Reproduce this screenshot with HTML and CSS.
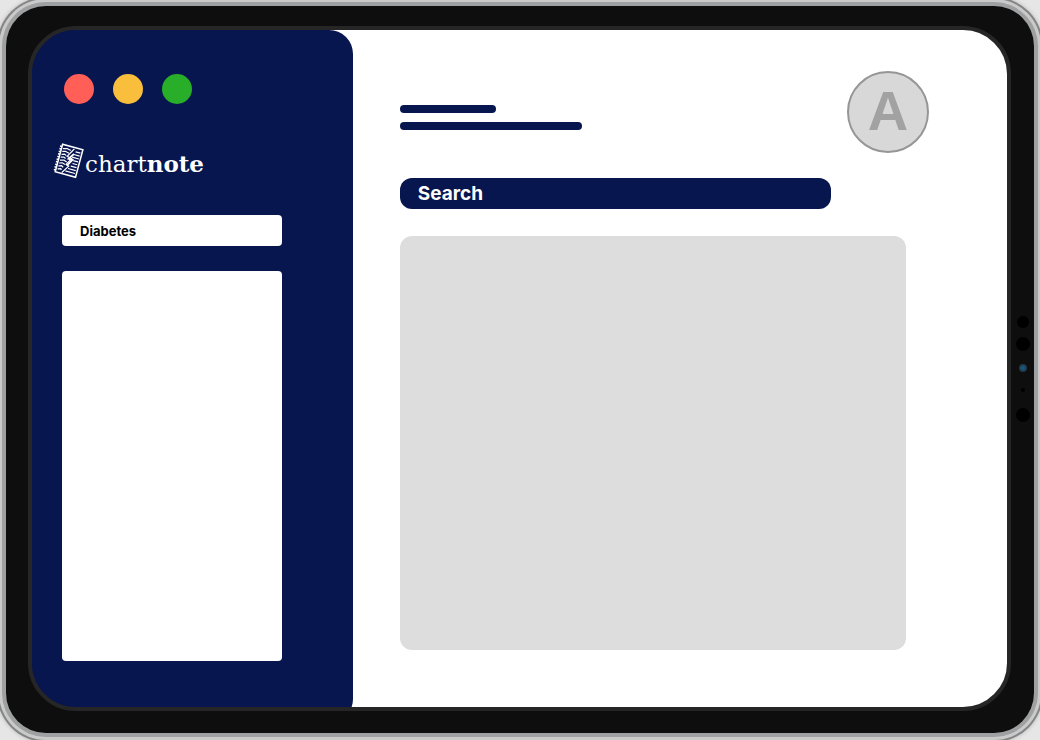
FILE: index.html
```html
<!DOCTYPE html>
<html lang="en">
<head>
<meta charset="utf-8">
<meta name="viewport" content="width=device-width, initial-scale=1">
<title>Chartnote</title>
<link rel="stylesheet" href="styles.css">
</head>
<body>
<div class="tablet">
  <div class="screen">
    <aside class="sidebar">
      <div class="lights">
        <span class="light light-red"></span>
        <span class="light light-yellow"></span>
        <span class="light light-green"></span>
      </div>
      <div class="brand">
        <svg class="brand-icon" width="32" height="36" viewBox="0 0 32 36" fill="none" stroke="#fff" aria-hidden="true">
          <g transform="rotate(15 16 18)">
            <path d="M5.500 3.500H26.500V32H5.500Z" stroke-width="1.500"/>
            <path d="M4.500 5v26" stroke-width="2" stroke-dasharray="1.500 1.200"/>
            <path d="M7 7.500l4-1 4 1M7 10.500l3-1 4 1M7 13.500l3-1 2 1M7 16.500l3-1 2 1M7 19.500l4-1 3 1M7 22.500l3-1 3 1M7 25.500l3-1 2 1M7 28.500l3-1 1 1M20 7.500h5M19 10.500h6M18 13.500h7M20 16.500h5M20 19.500h5M19 22.500h6M17 25.500h8M15 28.500h10" stroke-width="1.200"/>
            <path d="M18 5l-5 9 5 1-4 7 3 1-5 8" stroke-width="1.200"/>
            <path d="M19 10l-4 6 4 0-4 7" stroke-width="1.800"/>
          </g>
        </svg>
        <span class="brand-name">chart<b>note</b></span>
      </div>
      <input class="topic" type="text" value="Diabetes" aria-label="Topic">
      <div class="results"></div>
    </aside>
    <main class="content">
      <header class="header">
        <div class="lines">
          <span class="line line-short"></span>
          <span class="line line-long"></span>
        </div>
        <div class="avatar">A</div>
      </header>
      <input class="search" type="search" placeholder="Search" aria-label="Search">
      <section class="panel"></section>
    </main>
  </div>
  <div class="sensors">
    <span class="sensor sensor-medium"></span>
    <span class="sensor sensor-large"></span>
    <span class="sensor sensor-lens"></span>
    <span class="sensor sensor-small"></span>
    <span class="sensor sensor-large"></span>
  </div>
</div>
</body>
</html>
```
FILE: styles.css
```css
* {
  box-sizing: border-box;
}

body {
  margin: 0;
  min-height: 100vh;
  padding: 6px 6px 7px;
  display: flex;
  overflow: hidden;
  background: #e6e6e6;
  font-family: Inter, "Liberation Sans", sans-serif;
}

.tablet {
  position: relative;
  flex: 1;
  display: flex;
  padding: 20px 23px 22px 22px;
  border-radius: 40px;
  background: #0e0e0e;
  box-shadow: 0 0 0 4px #9fa0a1, 0 0 0 7px #cacaca, 0 0 0 9px #858585, 0 0 4px 9px #b8b8b8;
}

.screen {
  flex: 1;
  display: flex;
  overflow: hidden;
  border: 4px solid #262626;
  border-radius: 48px;
  background: linear-gradient(to right, #08164f 60px, #fff 60px);
  background-origin: border-box;
}

.sidebar {
  flex: 0 0 32.9%;
  display: flex;
  flex-direction: column;
  margin-bottom: -16px;
  padding: 44px 71px 62px 30px;
  border-radius: 0 24px 24px 0;
  background: #08164f;
}

.lights {
  display: flex;
  gap: 19px;
  padding-left: 2px;
}

.light {
  width: 30px;
  height: 30px;
  border-radius: 50%;
}

.light-red {
  background: #ff5f57;
}

.light-yellow {
  background: #f9be3c;
}

.light-green {
  background: #28ae28;
}

.brand {
  display: flex;
  align-items: center;
  margin: 37px 0 34px -9px;
  color: #fff;
}

.brand-icon {
  flex: none;
}

.brand-name {
  padding-top: 6px;
  font-family: "DejaVu Serif", serif;
  font-size: 23px;
  line-height: 33px;
}

.topic {
  width: 100%;
  height: 31px;
  padding: 0 18px;
  border: 0;
  border-radius: 4px;
  background: #fff;
  color: #000;
  font: 700 13px Inter, "Liberation Sans", sans-serif;
}

.results {
  flex: 1;
  margin-top: 25px;
  border-radius: 4px;
  background: #fff;
}

.content {
  flex: 1;
  display: flex;
  flex-direction: column;
  padding: 41px 101px 57px 47px;
}

.header {
  display: flex;
  justify-content: space-between;
  margin-right: -23px;
}

.lines {
  display: flex;
  flex-direction: column;
  gap: 9px;
  padding-top: 34px;
}

.line {
  height: 8px;
  border-radius: 4px;
  background: #08164f;
}

.line-short {
  width: 96px;
}

.line-long {
  width: 182px;
}

.avatar {
  display: flex;
  align-items: center;
  justify-content: center;
  width: 82px;
  height: 82px;
  padding-bottom: 4px;
  border: 2px solid #969696;
  border-radius: 50%;
  background: #d8d8d8;
  color: #a2a2a2;
  font: bold 56px "Liberation Sans", sans-serif;
}

.search {
  width: 85.2%;
  height: 31px;
  margin-top: 25px;
  padding: 0 18px;
  border: 0;
  border-radius: 12px;
  background: #08164f;
  color: #fff;
  font: 700 19px Inter, "Liberation Sans", sans-serif;
}

.search::placeholder {
  color: #fff;
  opacity: 1;
}

.panel {
  flex: 1;
  margin-top: 27px;
  border-radius: 12px;
  background: #ddd;
}

/* Camera and sensors sit on the bezel, centred on its right side */
.sensors {
  position: absolute;
  top: 50%;
  right: 4px;
  display: flex;
  flex-direction: column;
  align-items: center;
  padding-bottom: 2px;
  transform: translateY(-50%);
}

.sensor {
  border-radius: 50%;
  background: #000;
}

.sensor-medium {
  width: 12px;
  height: 12px;
  margin-bottom: 9px;
}

.sensor-large {
  width: 14px;
  height: 14px;
}

.sensor-lens {
  width: 8px;
  height: 8px;
  margin: 13px 0 16px;
  background: radial-gradient(#14577d 25%, #26323a 70%);
}

.sensor-small {
  width: 4px;
  height: 4px;
  margin-bottom: 16px;
}
```
